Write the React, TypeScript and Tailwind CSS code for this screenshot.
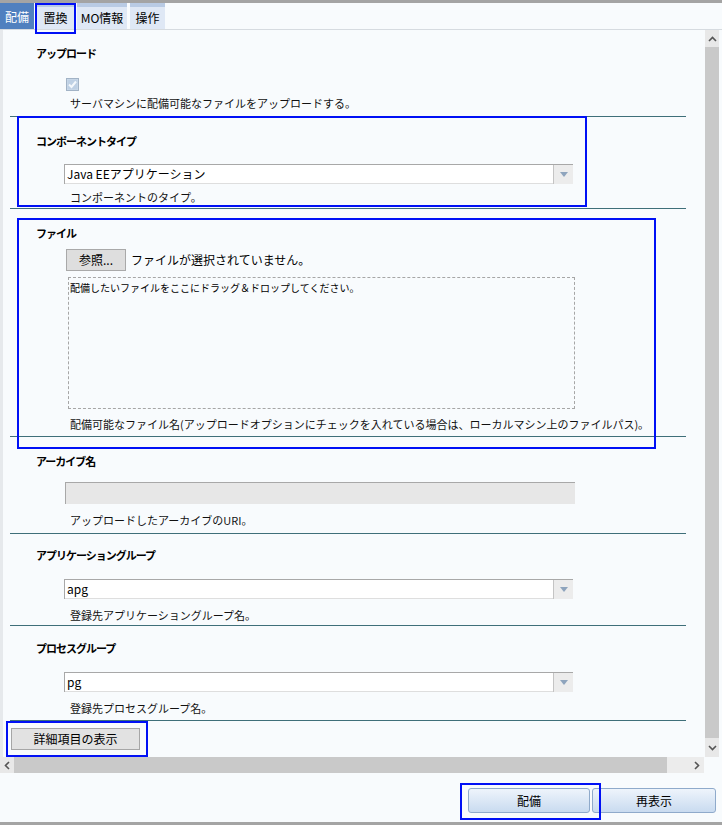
import type { ReactNode } from "react";

type SectionProps = {
  title: string;
  desc: string;
  pt: string;
  descMt: string;
  mb: string;
  children: ReactNode;
};

// one form section: bold title, control, help text, rule underneath
function Section({ title, desc, pt, descMt, mb, children }: SectionProps) {
  return (
    <div className={pt}>
      <div className="pl-[33px] text-[11px] font-bold leading-[14px] tracking-[-1px] text-black">{title}</div>
      {children}
      <div className={`pl-[67px] text-[11px] leading-[14px] text-[#111] ${descMt} ${mb}`}>{desc}</div>
      <div className="ml-[7px] h-px w-[676px] bg-[#3f6f79]" />
    </div>
  );
}

function Select({ value, mt }: { value: string; mt: string }) {
  return (
    <div className={`ml-[61px] flex h-[20px] w-[509px] border-t border-l border-[#a8a8a8] ${mt}`}>
      <div className="flex-1 border-b border-[#dedede] bg-white pl-[2px] text-[12px] leading-[18px] text-black">
        {value}
      </div>
      <div className="flex w-[20px] items-center justify-center border-l border-[#c4c4c4] bg-[#ececec]">
        <svg width="8" height="5" viewBox="0 0 8 5">
          <path d="M0 0 L8 0 L4 5 Z" fill="#8ea4bd" />
        </svg>
      </div>
    </div>
  );
}

const tabs = [
  { label: "配備", w: "w-[34px]", active: true },
  { label: "置換", w: "w-[37px]", active: false },
  { label: "MO情報", w: "w-[50px]", active: false },
  { label: "操作", w: "w-[35px]", active: false },
];

export default function App() {
  return (
    <div className="relative flex h-[825px] w-[722px] flex-col overflow-hidden bg-[#f8fbfd] font-['Noto_Sans_CJK_JP',sans-serif] text-black">
      <div className="h-[3px] bg-[#a4a4a4]" />

      {/* Tabs */}
      <div className="flex h-[26px] gap-[3px]">
        {tabs.map((t) =>
          t.active ? (
            <div key={t.label} className={`${t.w} bg-[#5080bf] text-center text-[12px] leading-[28px] text-white`}>
              {t.label}
            </div>
          ) : (
            <div
              key={t.label}
              className={`${t.w} border-t-4 border-[#b9cbe4] bg-[#dfe8f5] text-center text-[12px] leading-[21px] text-black`}
            >
              {t.label}
            </div>
          )
        )}
      </div>
      <div className="h-px bg-[#d6dbe0]" />

      {/* Scroll area */}
      <div className="flex h-[727px]">
        <div className="w-[704px] border-l-[3px] border-[#e6e9ec]">
          <Section title="アップロード" desc="サーバマシンに配備可能なファイルをアップロードする。" pt="pt-[16px]" descMt="mt-[5px]" mb="mb-[6px]">
            <div className="ml-[63px] mt-[18px] h-[13px] w-[13px]">
              <svg width="13" height="13" viewBox="0 0 13 13">
                <rect x="0.5" y="0.5" width="12" height="12" fill="#cfdcea" stroke="#a2b3c6" />
                <rect x="1.5" y="1.5" width="10" height="10" fill="#bed0e4" />
                <path d="M3 6.5 L5.5 9 L10 3.5" fill="none" stroke="#f4f8fc" strokeWidth="2" />
              </svg>
            </div>
          </Section>

          <Section title="コンポーネントタイプ" desc="コンポーネントのタイプ。" pt="pt-[17px]" descMt="mt-[6px]" mb="mb-[4px]">
            <Select value="Java EEアプリケーション" mt="mt-[16px]" />
          </Section>

          <Section
            title="ファイル"
            desc="配備可能なファイル名(アップロードオプションにチェックを入れている場合は、ローカルマシン上のファイルパス)。"
            pt="pt-[17px]"
            descMt="mt-[8px]"
            mb="mb-[5px]"
          >
            <div className="ml-[63px] mt-[9px] flex items-center">
              <div className="flex h-[22px] w-[60px] items-center justify-center border border-[#a9a9a9] bg-[#dedede] text-[12px]">
                参照...
              </div>
              <div className="ml-[5px] text-[12px]">ファイルが選択されていません。</div>
            </div>
            <div className="ml-[65px] mt-[6px] h-[132px] w-[507px] border border-dashed border-[#a6a6a6] px-[1px] text-[10px] leading-[20px]">
              配備したいファイルをここにドラッグ＆ドロップしてください。
            </div>
          </Section>

          <Section title="アーカイブ名" desc="アップロードしたアーカイブのURI。" pt="pt-[17px]" descMt="mt-[9px]" mb="mb-[6px]">
            <div className="ml-[62px] mt-[14px] h-[22px] w-[510px] border-t border-l border-[#a8a8a8] bg-[#e7e7e7]" />
          </Section>

          <Section title="アプリケーショングループ" desc="登録先アプリケーショングループ名。" pt="pt-[14px]" descMt="mt-[9px]" mb="mb-[3px]">
            <Select value="apg" mt="mt-[17px]" />
          </Section>

          <Section title="プロセスグループ" desc="登録先プロセスグループ名。" pt="pt-[15px]" descMt="mt-[9px]" mb="mb-[5px]">
            <Select value="pg" mt="mt-[17px]" />
          </Section>

          <div className="ml-[8px] mt-[7px] flex h-[22px] w-[129px] items-center justify-center border border-[#a6a6a6] bg-[#e2e2e2] text-[12px]">
            詳細項目の表示
          </div>
        </div>

        {/* vertical scrollbar */}
        <div className="ml-px flex w-[14px] flex-col">
          <div className="flex h-[17px] items-center justify-center bg-[#e8e8e8]">
            <svg width="9" height="6" viewBox="0 0 9 6">
              <path d="M1 5 L4.5 1.5 L8 5" fill="none" stroke="#555" strokeWidth="1.6" />
            </svg>
          </div>
          <div className="flex-1 bg-[#c9c9c9]" />
          <div className="flex h-[19px] items-center justify-center bg-[#e8e8e8]">
            <svg width="9" height="6" viewBox="0 0 9 6">
              <path d="M1 1 L4.5 4.5 L8 1" fill="none" stroke="#555" strokeWidth="1.6" />
            </svg>
          </div>
        </div>
      </div>

      {/* horizontal scrollbar */}
      <div className="flex h-[16px]">
        <div className="flex w-[14px] items-center justify-center bg-[#e8e8e8]">
          <svg width="6" height="9" viewBox="0 0 6 9">
            <path d="M5 1 L1.5 4.5 L5 8" fill="none" stroke="#555" strokeWidth="1.6" />
          </svg>
        </div>
        <div className="w-[653px] bg-[#c9c9c9]" />
        <div className="w-[23px] bg-[#ececec]" />
        <div className="flex w-[14px] items-center justify-center bg-[#ececec]">
          <svg width="6" height="9" viewBox="0 0 6 9">
            <path d="M1 1 L4.5 4.5 L1 8" fill="none" stroke="#555" strokeWidth="1.6" />
          </svg>
        </div>
        <div className="flex-1" />
      </div>

      {/* footer */}
      <div className="flex flex-1 items-start justify-end gap-[2px] pr-[6px] pt-[15px]">
        <div className="flex h-[25px] w-[122px] items-center justify-center rounded-[3px] border border-[#8faacb] bg-gradient-to-b from-[#eef4fb] to-[#c9dbf0] text-[12px]">
          配備
        </div>
        <div className="flex h-[25px] w-[124px] items-center justify-center rounded-[3px] border border-[#8faacb] bg-gradient-to-b from-[#eef4fb] to-[#c9dbf0] text-[12px]">
          再表示
        </div>
      </div>
      <div className="h-[3px] bg-[#a4a4a4]" />

      {/* annotation boxes */}
      <div className="pointer-events-none absolute left-[35px] top-[3px] h-[31px] w-[41px] border-2 border-[#0010f5]" />
      <div className="pointer-events-none absolute left-[17px] top-[116px] h-[91px] w-[570px] border-2 border-[#0010f5]" />
      <div className="pointer-events-none absolute left-[17px] top-[218px] h-[231px] w-[639px] border-2 border-[#0010f5]" />
      <div className="pointer-events-none absolute left-[6px] top-[721px] h-[36px] w-[142px] border-2 border-[#0010f5]" />
      <div className="pointer-events-none absolute left-[460px] top-[783px] h-[37px] w-[141px] border-2 border-[#0010f5]" />
    </div>
  );
}
